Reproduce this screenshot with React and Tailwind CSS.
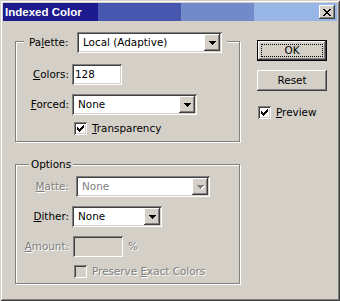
import React from "react";

const RAISED =
  "shadow-[inset_-1px_-1px_0_#404040,inset_1px_1px_0_#ffffff,inset_-2px_-2px_0_#808080,inset_2px_2px_0_#d4d0c8]";
const SUNKEN =
  "shadow-[inset_1px_1px_0_#808080,inset_-1px_-1px_0_#ffffff,inset_2px_2px_0_#404040,inset_-2px_-2px_0_#d4d0c8]";
const DIS = "text-[#808080] [text-shadow:1px_1px_0_#ffffff]";

function pixelPath(rows) {
  let d = "";
  rows.forEach((r, y) => {
    for (let x = 0; x < r.length; x++) if (r[x] === "X") d += `M${x} ${y}h1v1h-1z`;
  });
  return d;
}

const CHECK = pixelPath([
  "......X",
  ".....XX",
  "X...XXX",
  "XX.XXX.",
  "XXXXX..",
  ".XXX...",
  "..X....",
]);
const CLOSE = pixelPath([
  "XX....XX",
  ".XX..XX.",
  "..XXXX..",
  "...XX...",
  "..XXXX..",
  ".XX..XX.",
  "XX....XX",
]);
const ARROW = pixelPath(["XXXXXXX", ".XXXXX.", "..XXX..", "...X..."]);

function Arrow({ disabled }) {
  return (
    <div className={`w-[16px] h-full bg-[#d4d0c8] ${RAISED} flex items-center justify-center`}>
      <svg width="7" height="4" viewBox="0 0 7 4" shapeRendering="crispEdges" className="overflow-visible">
        {disabled && <path d={ARROW} fill="#ffffff" transform="translate(1,1)" />}
        <path d={ARROW} fill={disabled ? "#808080" : "#000000"} />
      </svg>
    </div>
  );
}

function Select({ value, w, disabled }) {
  return (
    <div className={`${w} h-[21px] bg-white ${SUNKEN} p-[2px] flex`}>
      <div className={`flex-1 flex items-center pl-[4px] ${disabled ? "text-[#808080]" : ""}`}>{value}</div>
      <Arrow disabled={disabled} />
    </div>
  );
}

function Checkbox({ checked, disabled }) {
  return (
    <div className={`w-[13px] h-[13px] ${disabled ? "bg-[#d4d0c8]" : "bg-white"} ${SUNKEN} flex items-center justify-center`}>
      {checked && (
        <svg width="7" height="7" viewBox="0 0 7 7" shapeRendering="crispEdges">
          <path d={CHECK} fill="#000000" />
        </svg>
      )}
    </div>
  );
}

function Label({ children, disabled }) {
  return (
    <div className={`w-[56px] pr-[3px] text-right ${disabled ? DIS : ""}`}>{children}</div>
  );
}

export default function App() {
  return (
    <div className="w-[340px] h-[301px] bg-[#d4d0c8] p-[3px] flex flex-col font-['DejaVu_Sans',Verdana,sans-serif] text-[10.4px] leading-[13px] text-black shadow-[inset_1px_1px_0_#d4d0c8,inset_-1px_-1px_0_#404040,inset_2px_2px_0_#ffffff,inset_-2px_-2px_0_#808080]">
      {/* Title bar */}
      <div className="h-[18px] flex items-center justify-between pl-[2px] pr-[2px] bg-[linear-gradient(to_right,#1b1b8e_0px,#1b1b8e_95px,#4757b0_95px,#4757b0_178px,#718ac9_178px,#718ac9_251px,#97b6e5_251px,#97b6e5_100%)]">
        <span className="text-white font-bold text-[11.5px] font-['Liberation_Sans',Arial,sans-serif]">Indexed Color</span>
        <div className={`w-[16px] h-[14px] bg-[#d4d0c8] ${RAISED} flex items-center justify-center`}>
          <svg width="8" height="7" viewBox="0 0 8 7" shapeRendering="crispEdges">
            <path d={CLOSE} fill="#000000" />
          </svg>
        </div>
      </div>

      <div className="flex">
        {/* Left column */}
        <div className="ml-[12px] mt-[20px] flex flex-col">
          {/* Palette group */}
          <div className="relative w-[225px] h-[101px] border border-[#808080] shadow-[1px_1px_0_#ffffff,inset_1px_1px_0_#ffffff] pt-[22px] flex flex-col">
            <div className="absolute top-[-10px] left-[8px] bg-[#d4d0c8] flex items-center pr-[5px]">
              <div className="w-[53px] pl-[5px]">
                Pa<u>l</u>ette:
              </div>
              <Select value="Local (Adaptive)" w="w-[145px]" />
            </div>
            <div className="flex items-center h-[21px]">
              <Label>
                <u>C</u>olors:
              </Label>
              <div className={`w-[50px] h-[21px] bg-white ${SUNKEN} flex items-center pl-[3px]`}>128</div>
            </div>
            <div className="flex items-center h-[21px] mt-[9px]">
              <Label>
                <u>F</u>orced:
              </Label>
              <Select value="None" w="w-[125px]" />
            </div>
            <div className="flex items-center mt-[7px] ml-[58px] gap-[5px]">
              <Checkbox checked />
              <span>
                <u>T</u>ransparency
              </span>
            </div>
          </div>

          {/* Options group */}
          <div className="relative mt-[22px] w-[225px] h-[120px] border border-[#808080] shadow-[1px_1px_0_#ffffff,inset_1px_1px_0_#ffffff] pt-[11px] flex flex-col">
            <div className="absolute top-[-7px] left-[13px] bg-[#d4d0c8] px-[2px]">Options</div>
            <div className="flex items-center h-[21px]">
              <Label disabled>
                <u>M</u>atte:
              </Label>
              <div className="ml-[4px]">
                <Select value="None" w="w-[134px]" disabled />
              </div>
            </div>
            <div className="flex items-center h-[21px] mt-[9px]">
              <Label>
                <u>D</u>ither:
              </Label>
              <Select value="None" w="w-[90px]" />
            </div>
            <div className="flex items-center h-[21px] mt-[9px]">
              <Label disabled>
                <u>A</u>mount:
              </Label>
              <div className={`ml-[1px] w-[50px] h-[21px] bg-[#d4d0c8] ${SUNKEN}`} />
              <span className={`ml-[5px] ${DIS}`}>%</span>
            </div>
            <div className="flex items-center mt-[8px] ml-[58px] gap-[5px]">
              <Checkbox disabled />
              <span className={DIS}>
                Preserve <u>E</u>xact Colors
              </span>
            </div>
          </div>
        </div>

        {/* Right column */}
        <div className="ml-[17px] mt-[19px] flex flex-col">
          <div className="w-[70px] h-[21px] border border-black">
            <div className={`w-full h-full ${RAISED} p-[3px]`}>
              <div className="w-full h-full border border-dotted border-black flex items-center justify-center">
                OK
              </div>
            </div>
          </div>
          <div className={`mt-[9px] w-[70px] h-[21px] ${RAISED} flex items-center justify-center`}>Reset</div>
          <div className="mt-[15px] flex items-center gap-[5px] ml-[1px]">
            <Checkbox checked />
            <span>
              <u>P</u>review
            </span>
          </div>
        </div>
      </div>
    </div>
  );
}
